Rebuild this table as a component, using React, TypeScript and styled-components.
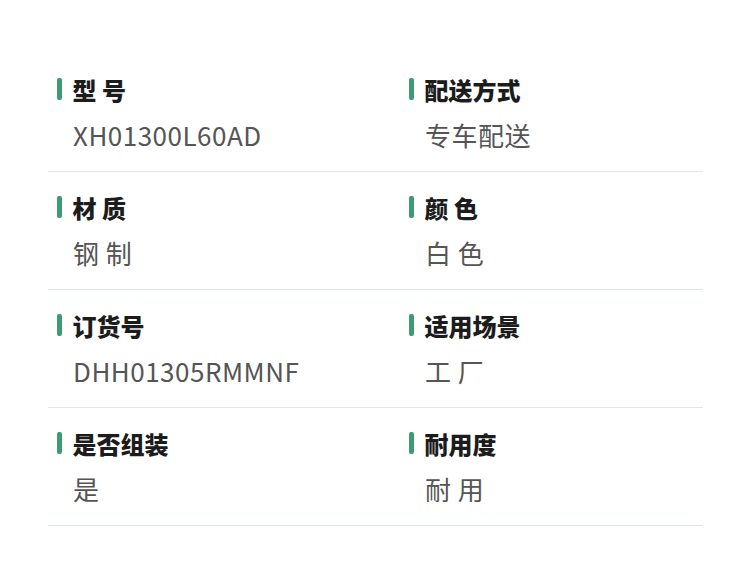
import React from "react";
import styled, { createGlobalStyle } from "styled-components";

const GlobalStyle = createGlobalStyle`
  body {
    margin: 0;
    background: #fff;
    font-family: "Noto Sans CJK SC", sans-serif;
  }
`;

const Wrapper = styled.div`
  width: 750px;
  height: 570px;
  padding: 54px 47px 0 48px;
  box-sizing: border-box;
`;

const Row = styled.div`
  display: grid;
  grid-template-columns: 352px 1fr;
  border-bottom: 1px solid #dde8e6;
  padding: 23px 0 21px;
`;

const Cell = styled.div`
  display: flex;
  flex-direction: column;
  padding-left: 9px;
`;

const Label = styled.div`
  display: flex;
  align-items: center;
  height: 24px;
  font-family: "Noto Sans CJK SC", sans-serif;
  font-size: 24px;
  font-weight: 900;
  color: #1c1c1c;
  &::before {
    content: "";
    width: 4.5px;
    height: 22px;
    border-radius: 2px;
    background: #3c9b72;
    margin-right: 11px;
  }
`;

const Value = styled.div`
  margin-top: 18px;
  padding-left: 16px;
  line-height: 31px;
  font-family: "Noto Sans CJK SC", sans-serif;
  font-size: 26px;
  letter-spacing: 0.5px;
  color: #555;
`;

const rows = [
  [
    { label: "型 号", value: "XH01300L60AD" },
    { label: "配送方式", value: "专车配送" },
  ],
  [
    { label: "材 质", value: "钢 制" },
    { label: "颜 色", value: "白 色" },
  ],
  [
    { label: "订货号", value: "DHH01305RMMNF" },
    { label: "适用场景", value: "工 厂" },
  ],
  [
    { label: "是否组装", value: "是" },
    { label: "耐用度", value: "耐 用" },
  ],
];

function App() {
  return (
    <Wrapper>
      <GlobalStyle />
      {rows.map((row, i) => (
        <Row key={i}>
          {row.map((item) => (
            <Cell key={item.label}>
              <Label>{item.label}</Label>
              <Value>{item.value}</Value>
            </Cell>
          ))}
        </Row>
      ))}
    </Wrapper>
  );
}

export default App;
